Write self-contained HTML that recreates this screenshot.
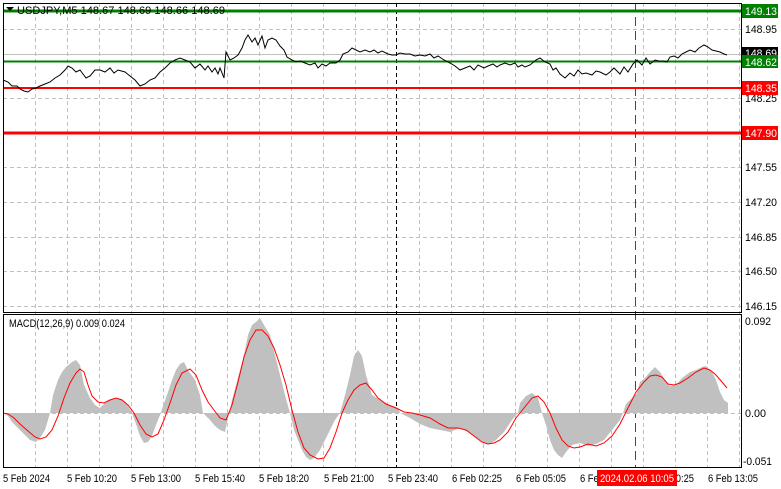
<!DOCTYPE html>
<html><head><meta charset="utf-8"><style>
body{margin:0;background:#fff;width:781px;height:489px;overflow:hidden;font-family:"Liberation Sans",sans-serif;}
svg{position:absolute;left:0;top:0}
text{font-family:"Liberation Sans",sans-serif;font-size:11px}
</style></head><body>
<svg width="781" height="489" viewBox="0 0 781 489">
<g stroke="#c0c0c0" stroke-dasharray="4,3" stroke-width="1">
<path d="M35.5 3V468M67.5 3V468M99.5 3V468M131.5 3V468M163.5 3V468M195.5 3V468M227.5 3V468M259.5 3V468M291.5 3V468M323.5 3V468M355.5 3V468M387.5 3V468M419.5 3V468M451.5 3V468M483.5 3V468M515.5 3V468M547.5 3V468M579.5 3V468M611.5 3V468M643.5 3V468M675.5 3V468M707.5 3V468M739.5 3V468"/>
<path d="M3 29.5H741M3 98.5H741M3 167.5H741M3 202.5H741M3 237.5H741M3 271.5H741M3 306.5H741"/>
</g>
<path d="M3 54.5H741" stroke="#c0c0c0"/>
<path d="M396.5 3V468" stroke="#000" stroke-dasharray="4,3"/>
<path d="M635.5 3V468" stroke="#e00" stroke-dasharray="9,5" stroke-width="1"/>
<path d="M3 11H741" stroke="#008000" stroke-width="3"/>
<path d="M3 61.5H741" stroke="#008000" stroke-width="2"/>
<path d="M3 88H741" stroke="#ff0000" stroke-width="2"/>
<path d="M3 133H741" stroke="#ff0000" stroke-width="3"/>
<polyline fill="none" stroke="#000" stroke-width="1" points="3,80 8,82 12,86 17,86 20,89 24,91 28,92 32,89 36,88 40,86 45,84 50,82 55,78 60,75 65,70 68,66 72,68 76,72 80,70 86,78 90,76 95,70 100,70 105,72 110,68 114,73 118,70 125,72 130,76 135,80 140,86 145,84 150,80 155,78 160,72 165,68 170,63 175,60 180,58 185,60 190,62 195,68 200,64 205,70 208,66 212,72 215,68 218,74 220,68 224,78 226,52 230,60 234,58 238,55 242,48 245,40 248,35 252,42 255,38 258,45 262,36 265,48 268,40 272,38 276,40 280,46 284,50 287,57 292,60 296,62 300,61 305,63 310,65 315,63 318,68 322,64 326,66 330,63 336,63 340,60 343,54 348,52 352,48 356,50 360,52 365,50 370,52 374,50 378,53 382,51 388,54 392,55 396,55 400,53 405,54 410,54 415,56 420,55 425,56 430,54 434,58 438,56 444,60 450,63 455,66 460,70 465,68 470,66 474,70 478,65 484,68 488,66 493,64 497,67 500,65 505,63 510,65 515,63 518,67 522,65 525,67 530,65 536,60 540,58 545,62 550,64 553,70 556,68 560,74 565,78 570,73 574,76 578,70 582,74 586,73 592,75 596,71 600,72 606,75 610,72 614,68 617,71 620,74 624,67 628,72 633,64 637,60 642,65 646,58 650,64 655,60 659,61 663,61 667,62 670,57 674,56 678,58 682,54 686,52 690,50 695,52 699,48 704,45 708,47 712,50 716,51 720,52 724,54 727,55"/>
<polygon fill="#c0c0c0" points="3,413 8,416 12,422 18,428 24,434 30,440 36,442 40,438 45,430 48,420 50,413 53,395 58,380 62,372 66,367 72,362 76,360 80,365 84,385 90,398 95,405 100,408 104,404 108,400 115,398 122,399 128,406 132,413 136,424 140,436 144,443 148,442 152,436 156,425 160,415 163,406 168,392 172,380 176,370 180,364 184,362 188,370 195,380 200,395 203,413 210,420 215,426 220,430 225,432 228,418 232,400 236,385 240,370 244,355 248,335 252,325 256,322 260,318 264,325 270,335 275,355 280,375 285,395 290,413 294,430 298,440 302,450 306,457 310,460 314,458 320,450 325,440 330,430 335,420 340,413 345,395 350,375 354,356 358,350 362,356 366,375 372,395 380,400 390,405 398,408 400,413 410,418 420,424 430,428 440,430 450,432 460,428 468,432 476,438 484,442 490,444 496,440 504,432 512,420 518,413 520,403 526,396 532,393 538,398 542,413 546,425 550,440 554,450 558,455 562,458 566,452 572,445 580,443 588,446 596,444 604,440 612,430 620,420 623,413 626,404 632,398 636,395 640,382 645,378 650,372 655,367 660,372 665,380 670,386 676,385 682,378 690,372 696,370 702,367 706,366 712,372 716,380 720,392 724,400 728,403 728,413"/>
<path d="M3 413.5H741" stroke="#c0c0c0" stroke-dasharray="4,3"/>
<polyline fill="none" stroke="#f00" stroke-width="1" points="3,413 8,414 14,418 20,424 28,431 35,437 40,439 46,437 52,430 58,416 64,398 70,383 76,373 80,369 84,372 88,385 92,396 98,402 104,403 110,400 116,398 122,400 128,405 134,413 140,425 146,434 152,437 158,434 164,420 170,403 176,385 182,373 190,369 196,375 202,390 208,402 214,410 220,418 226,420 232,405 238,382 244,357 250,340 256,330 262,330 268,336 274,348 280,365 286,385 292,410 298,432 304,448 310,455 318,459 324,458 330,448 336,432 342,413 348,400 354,390 360,385 366,383 372,390 378,398 386,404 396,408 404,412 412,413 420,415 430,418 440,424 448,428 458,428 466,430 474,436 482,442 488,444 494,443 500,440 508,432 516,418 524,408 532,398 538,396 544,402 550,413 556,428 562,440 568,446 574,448 580,447 588,444 596,446 604,443 612,436 620,424 628,408 636,392 644,382 650,376 656,375 662,377 668,384 674,385 680,383 688,378 696,372 704,368 710,370 716,375 722,382 727,388"/>
<rect x="3.5" y="3.5" width="738" height="309" fill="none" stroke="#000"/>
<rect x="3.5" y="314.5" width="738" height="153" fill="none" stroke="#000"/>
<path d="M6 7l4 4 4-4z" fill="#000"/>
<text x="17" y="14" fill="#000" font-size="10" textLength="208" lengthAdjust="spacingAndGlyphs">USDJPY,M5  148.67 148.69 148.66 148.69</text>
<text x="9" y="327" fill="#000" font-size="10" textLength="116" lengthAdjust="spacingAndGlyphs">MACD(12,26,9) 0.009 0.024</text>
<g fill="#000" font-size="10.5">
<text x="745" y="33" textLength="32" lengthAdjust="spacingAndGlyphs">148.95</text>
<text x="745" y="102" textLength="32" lengthAdjust="spacingAndGlyphs">148.25</text>
<text x="745" y="171" textLength="32" lengthAdjust="spacingAndGlyphs">147.55</text>
<text x="745" y="206" textLength="32" lengthAdjust="spacingAndGlyphs">147.20</text>
<text x="745" y="241" textLength="32" lengthAdjust="spacingAndGlyphs">146.85</text>
<text x="745" y="275" textLength="32" lengthAdjust="spacingAndGlyphs">146.50</text>
<text x="745" y="310" textLength="32" lengthAdjust="spacingAndGlyphs">146.15</text>
<text x="745" y="325" textLength="26" lengthAdjust="spacingAndGlyphs">0.092</text>
<text x="745" y="417" textLength="21" lengthAdjust="spacingAndGlyphs">0.00</text>
<text x="743" y="465" textLength="29" lengthAdjust="spacingAndGlyphs">-0.051</text>
</g>
<g font-size="10.5" fill="#fff">
<rect x="742" y="4" width="36" height="14" fill="#008000"/><text x="745" y="15" textLength="32" lengthAdjust="spacingAndGlyphs">149.13</text>
<rect x="742" y="47" width="36" height="13" fill="#000"/><text x="745" y="57" textLength="32" lengthAdjust="spacingAndGlyphs">148.69</text>
<rect x="742" y="55" width="36" height="13" fill="#008000"/><text x="745" y="66" textLength="32" lengthAdjust="spacingAndGlyphs">148.62</text>
<rect x="742" y="81" width="36" height="14" fill="#f00"/><text x="745" y="92" textLength="32" lengthAdjust="spacingAndGlyphs">148.35</text>
<rect x="742" y="126" width="36" height="14" fill="#f00"/><text x="745" y="137" textLength="32" lengthAdjust="spacingAndGlyphs">147.90</text>
</g>
<g fill="#000" font-size="10">
<text x="3" y="482" textLength="47" lengthAdjust="spacingAndGlyphs">5 Feb 2024</text>
<text x="67" y="482" textLength="50" lengthAdjust="spacingAndGlyphs">5 Feb 10:20</text>
<text x="131" y="482" textLength="50" lengthAdjust="spacingAndGlyphs">5 Feb 13:00</text>
<text x="195" y="482" textLength="50" lengthAdjust="spacingAndGlyphs">5 Feb 15:40</text>
<text x="259" y="482" textLength="50" lengthAdjust="spacingAndGlyphs">5 Feb 18:20</text>
<text x="324" y="482" textLength="50" lengthAdjust="spacingAndGlyphs">5 Feb 21:00</text>
<text x="388" y="482" textLength="50" lengthAdjust="spacingAndGlyphs">5 Feb 23:40</text>
<text x="452" y="482" textLength="50" lengthAdjust="spacingAndGlyphs">6 Feb 02:25</text>
<text x="516" y="482" textLength="50" lengthAdjust="spacingAndGlyphs">6 Feb 05:05</text>
<text x="580" y="482" textLength="50" lengthAdjust="spacingAndGlyphs">6 Feb 07:45</text>
<text x="644" y="482" textLength="50" lengthAdjust="spacingAndGlyphs">6 Feb 10:25</text>
<text x="708" y="482" textLength="50" lengthAdjust="spacingAndGlyphs">6 Feb 13:05</text>
</g>
<rect x="597" y="470" width="80" height="16" fill="#f00"/>
<text x="600" y="482" fill="#fff" font-size="10" textLength="74" lengthAdjust="spacingAndGlyphs">2024.02.06 10:05</text>
</svg>
</body></html>
